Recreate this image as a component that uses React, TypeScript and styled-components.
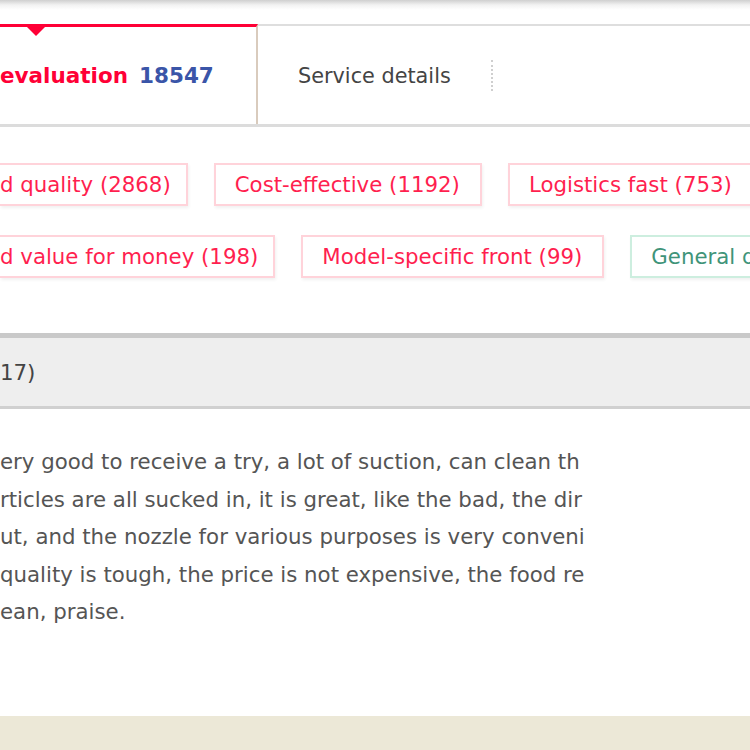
import styled, { createGlobalStyle } from "styled-components";

const GlobalStyle = createGlobalStyle`
    html, body {
        margin: 0;
        padding: 0;
        background: #fff;
    }
    body {
        font-family: "DejaVu Sans", "Liberation Sans", sans-serif;
        overflow: hidden;
    }
`

type TagItem = { label: string; tone: "red" | "green"; clipped?: boolean };

const tagRows: TagItem[][] = [
    [
        { label: "d quality (2868)", tone: "red", clipped: true },
        { label: "Cost-effective (1192)", tone: "red" },
        { label: "Logistics fast (753)", tone: "red" },
    ],
    [
        { label: "d value for money (198)", tone: "red", clipped: true },
        { label: "Model-specific front (99)", tone: "red" },
        { label: "General quality (52)", tone: "green" },
    ],
];

const reviewLines = [
    "ery good to receive a try, a lot of suction, can clean th",
    "rticles are all sucked in, it is great, like the bad, the dir",
    "ut, and the nozzle for various purposes is very conveni",
    "quality is tough, the price is not expensive, the food re",
    "ean, praise.",
];

const App = () => {
    return (
        <Page>
            <GlobalStyle />
            <TopShade />
            <TabBar>
                <ActiveTab>
                    <TabTitle>evaluation</TabTitle>
                    <TabCount>18547</TabCount>
                </ActiveTab>
                <ServiceTab>Service details</ServiceTab>
                <DottedSeparator />
            </TabBar>
            <TagArea>
                {tagRows.map((row, i) => (
                    <TagRow key={i}>
                        {row.map((tag) => (
                            <Tag key={tag.label} $tone={tag.tone} $clipped={tag.clipped}>
                                {tag.label}
                            </Tag>
                        ))}
                    </TagRow>
                ))}
            </TagArea>
            <CountBar>17)</CountBar>
            <ReviewText>
                {reviewLines.map((line) => (
                    <ReviewLine key={line}>{line}</ReviewLine>
                ))}
            </ReviewText>
            <Filler />
            <FooterBand />
        </Page>
    )
}

const Page = styled.div`
    width: 750px;
    height: 750px;
    overflow: hidden;
    display: flex;
    flex-direction: column;
    background: #fff;
`
const TopShade = styled.div`
    height: 24px;
    flex-shrink: 0;
    background: linear-gradient(to bottom, #cfcfcf 0px, #f2f2f2 5px, #fff 10px);
`
const TabBar = styled.div`
    height: 98px;
    flex-shrink: 0;
    display: flex;
    align-items: stretch;
    border-top: 2px solid #dedede;
    border-bottom: 3px solid #dcdcdc;
`
const ActiveTab = styled.div`
    position: relative;
    width: 256px;
    margin-top: -2px;
    border-top: 3px solid #ff0036;
    border-right: 2px solid #d9cbbd;
    display: flex;
    align-items: center;
    gap: 11px;
    font-size: 21.5px;
    font-weight: 700;
    &::after {
        content: "";
        position: absolute;
        left: 27px;
        top: 0;
        border-left: 9px solid transparent;
        border-right: 9px solid transparent;
        border-top: 9px solid #ff0036;
    }
`
const TabTitle = styled.span`
    color: #ff0036;
`
const TabCount = styled.span`
    color: #3a55a8;
`
const ServiceTab = styled.div`
    display: flex;
    align-items: center;
    padding: 1px 0 0 40px;
    font-size: 20.8px;
    color: #444;
`
const DottedSeparator = styled.div`
    align-self: center;
    margin-left: 40px;
    height: 31px;
    border-left: 2px dotted #cfcfcf;
`
const TagArea = styled.div`
    display: flex;
    flex-direction: column;
    gap: 29px;
    padding: 36px 0 55px;
    flex-shrink: 0;
`
const TagRow = styled.div`
    display: flex;
    gap: 26px;
    white-space: nowrap;
`
const Tag = styled.div<{ $tone: "red" | "green"; $clipped?: boolean }>`
    flex-shrink: 0;
    height: 39px;
    display: flex;
    align-items: center;
    padding: 0 ${(p) => (p.$clipped ? "15px 0 0" : "20px 0 19px")};
    font-size: 21.3px;
    color: ${(p) => (p.$tone === "red" ? "#ff1f4f" : "#3f9479")};
    border: 2px solid ${(p) => (p.$tone === "red" ? "#ffd3da" : "#cdeedf")};
    border-left-width: ${(p) => (p.$clipped ? "0" : "2px")};
    box-shadow: 1px 2px 3px rgba(0, 0, 0, 0.06);
    background: #fff;
`
const CountBar = styled.div`
    flex-shrink: 0;
    height: 68px;
    display: flex;
    align-items: center;
    background: #eeeeee;
    border-top: 5px solid #c9c9c9;
    border-bottom: 3px solid #d0d0d0;
    font-size: 21.3px;
    color: #444;
`
const ReviewText = styled.div`
    width: 585px;
    overflow: hidden;
    padding-top: 34px;
    flex-shrink: 0;
`
const ReviewLine = styled.div`
    white-space: nowrap;
    font-size: 21.3px;
    line-height: 37.5px;
    color: #555;
`
const Filler = styled.div`
    flex: 1;
`
const FooterBand = styled.div`
    height: 34px;
    flex-shrink: 0;
    background: #ece8d7;
`

export default App;
